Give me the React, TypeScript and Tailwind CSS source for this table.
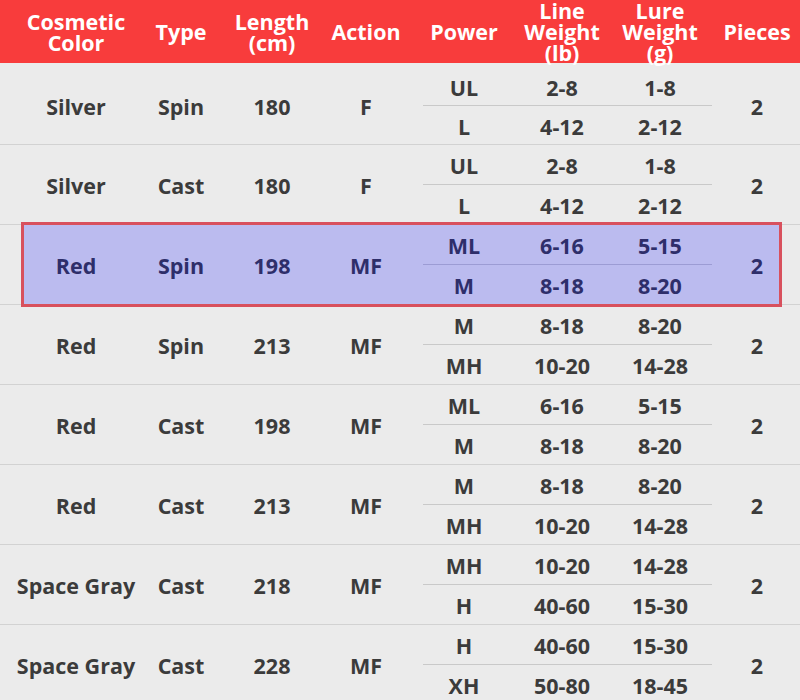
import React from 'react';

type SubRow = { power: string; line: string; lure: string };

interface RodRow {
    color: string;
    type: string;
    length: string;
    action: string;
    subs: SubRow[];
    pieces: string;
    highlight?: boolean;
}

const rows: RodRow[] = [
    { color: 'Silver', type: 'Spin', length: '180', action: 'F', subs: [{ power: 'UL', line: '2-8', lure: '1-8' }, { power: 'L', line: '4-12', lure: '2-12' }], pieces: '2' },
    { color: 'Silver', type: 'Cast', length: '180', action: 'F', subs: [{ power: 'UL', line: '2-8', lure: '1-8' }, { power: 'L', line: '4-12', lure: '2-12' }], pieces: '2' },
    { color: 'Red', type: 'Spin', length: '198', action: 'MF', subs: [{ power: 'ML', line: '6-16', lure: '5-15' }, { power: 'M', line: '8-18', lure: '8-20' }], pieces: '2', highlight: true },
    { color: 'Red', type: 'Spin', length: '213', action: 'MF', subs: [{ power: 'M', line: '8-18', lure: '8-20' }, { power: 'MH', line: '10-20', lure: '14-28' }], pieces: '2' },
    { color: 'Red', type: 'Cast', length: '198', action: 'MF', subs: [{ power: 'ML', line: '6-16', lure: '5-15' }, { power: 'M', line: '8-18', lure: '8-20' }], pieces: '2' },
    { color: 'Red', type: 'Cast', length: '213', action: 'MF', subs: [{ power: 'M', line: '8-18', lure: '8-20' }, { power: 'MH', line: '10-20', lure: '14-28' }], pieces: '2' },
    { color: 'Space Gray', type: 'Cast', length: '218', action: 'MF', subs: [{ power: 'MH', line: '10-20', lure: '14-28' }, { power: 'H', line: '40-60', lure: '15-30' }], pieces: '2' },
    { color: 'Space Gray', type: 'Cast', length: '228', action: 'MF', subs: [{ power: 'H', line: '40-60', lure: '15-30' }, { power: 'XH', line: '50-80', lure: '18-45' }], pieces: '2' },
];

function Cell({ className, children }: { className: string; children: React.ReactNode }) {
    return <div className={`flex items-center justify-center whitespace-nowrap shrink-0 ${className}`}>{children}</div>;
}

function Header() {
    return (
        <div className="flex h-[63px] bg-[#f83c3c] text-white text-[21.5px] font-bold leading-[21px] text-center">
            <Cell className="w-[152px]">Cosmetic<br />Color</Cell>
            <Cell className="w-[58px]">Type</Cell>
            <Cell className="w-[124px]">Length<br />(cm)</Cell>
            <Cell className="w-[64px]">Action</Cell>
            <Cell className="w-[132px]">Power</Cell>
            <Cell className="w-[64px]">Line<br />Weight<br />(lb)</Cell>
            <Cell className="w-[132px]">Lure<br />Weight<br />(g)</Cell>
            <Cell className="w-[62px]">Pieces</Cell>
        </div>
    );
}

function Row({ row, first }: { row: RodRow; first: boolean }) {
    const hl = row.highlight;
    return (
        <div className={`relative border-b border-[#d2d2d2] ${first ? 'h-[82px] pt-[4px]' : 'h-[80px]'}`}>
            {hl ? (
                <div className="absolute left-[21px] right-[18px] top-[-3px] bottom-[-3px] border-[3px] border-[#d8505d] bg-[#bbbbef]" />
            ) : null}
            <div className={`relative flex h-full text-[21.5px] font-bold ${hl ? 'text-[#2e2e6a]' : 'text-[#3b3b3b]'}`}>
                <Cell className="w-[152px] pt-[4px]">{row.color}</Cell>
                <Cell className="w-[58px] pt-[4px]">{row.type}</Cell>
                <Cell className="w-[124px] pt-[4px]">{row.length}</Cell>
                <Cell className="w-[64px] pt-[4px]">{row.action}</Cell>
                <div className="flex w-[328px] shrink-0 flex-col">
                    {row.subs.map((s, i) => (
                        <React.Fragment key={i}>
                            {i > 0 ? <div className={`ml-[25px] mr-[14px] h-px ${hl ? 'bg-[#9c9cd4]' : 'bg-[#c9c9c9]'}`} /> : null}
                            <div className="flex flex-1">
                                <Cell className="w-[132px] pt-[4px]">{s.power}</Cell>
                                <Cell className="w-[64px] pt-[4px]">{s.line}</Cell>
                                <Cell className="w-[132px] pt-[4px]">{s.lure}</Cell>
                            </div>
                        </React.Fragment>
                    ))}
                </div>
                <Cell className="w-[62px] pt-[4px]">{row.pieces}</Cell>
            </div>
        </div>
    );
}

export default function App() {
    return (
        <div className="w-[800px] h-[700px] overflow-hidden bg-[#ebebeb]" style={{ fontFamily: '"Open Sans", sans-serif' }}>
            <Header />
            {rows.map((r, i) => <Row key={i} row={r} first={i === 0} />)}
        </div>
    );
}
